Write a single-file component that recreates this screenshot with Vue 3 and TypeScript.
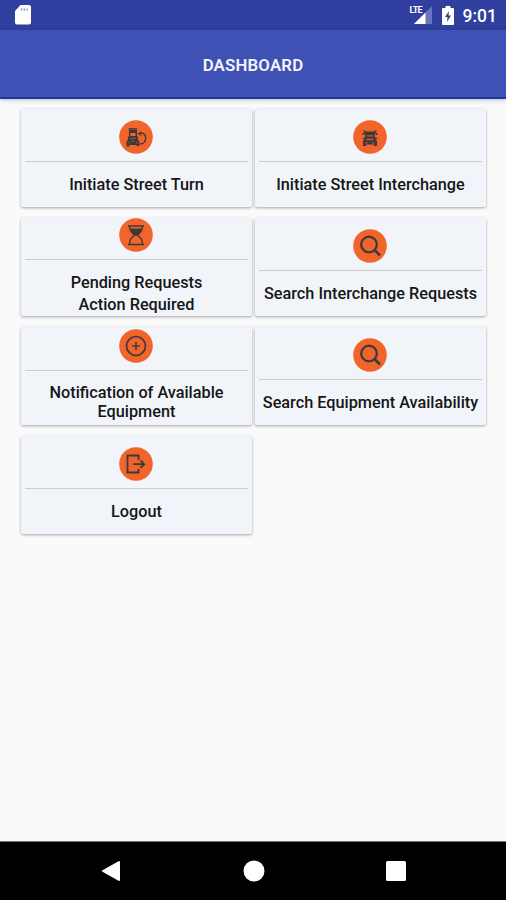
<script setup lang="ts">
type IconName = 'turn' | 'interchange' | 'hourglass' | 'search' | 'plus' | 'logout'

interface Tile {
  icon: IconName
  lines: string[]
  layout?: 'tall' | 'wrapped'
}

const tiles: Tile[] = [
  { icon: 'turn', lines: ['Initiate Street Turn'] },
  { icon: 'interchange', lines: ['Initiate Street Interchange'] },
  { icon: 'hourglass', lines: ['Pending Requests', 'Action Required'], layout: 'tall' },
  { icon: 'search', lines: ['Search Interchange Requests'] },
  { icon: 'plus', lines: ['Notification of Available', 'Equipment'], layout: 'wrapped' },
  { icon: 'search', lines: ['Search Equipment Availability'] },
  { icon: 'logout', lines: ['Logout'] },
]
</script>

<template>
  <div class="screen">
    <header class="status">
      <svg class="sd" viewBox="0 0 16 20" width="16" height="20">
        <path d="M5.500 0H14a2 2 0 0 1 2 2v15.500a2 2 0 0 1-2 2H2a2 2 0 0 1-2-2V6z" fill="#fff" />
        <path d="M6.500 3.500v2M9.300 3.500v2M12.100 3.500v2" stroke="#7d88c6" stroke-width="1.400" />
      </svg>
      <div class="signal">
        <svg viewBox="0 0 18 18" width="18" height="18">
          <path d="M18 0V18H0z" fill="#6976bc" />
          <path d="M11.500 6.500V18H0z" fill="#fff" />
        </svg>
        <span class="lte">LTE</span>
      </div>
      <svg class="battery" viewBox="0 0 12 19" width="12" height="19">
        <path d="M3.500 0h5v2H11a1 1 0 0 1 1 1v15a1 1 0 0 1-1 1H1a1 1 0 0 1-1-1V3a1 1 0 0 1 1-1h2.500z" fill="#fff" />
        <path d="M7 5 3 11h2.500L5 16l4-6.500H6.500z" fill="#303f9f" />
      </svg>
      <span class="time">9:01</span>
    </header>

    <div class="appbar"><h1 class="title">DASHBOARD</h1></div>

    <main class="grid">
      <section v-for="tile in tiles" :key="tile.lines[0]" class="card" :class="tile.layout">
        <svg class="icon" viewBox="0 0 34 34" width="34" height="34" fill="none" stroke="#3c3a38">
          <circle cx="17" cy="17" r="16.800" fill="#f1642b" stroke="none" />
          <g v-if="tile.icon === 'turn'">
            <path d="M9.500 9H18M10.700 10v6M17.300 10v6" stroke-width="1.500" />
            <path d="M10 10h8v3h-8zM9.500 16h9l1 4.500 1 1v4.500h-3V25h-7v1.500h-3V21.500l1-1z" fill="#3c3a38" stroke="none" />
            <path d="M11 18.300h6M9 22.800h2M17 22.800h2M12.500 21h3" stroke="#b05431" stroke-width="1" />
            <path d="M19.500 14c4-2.500 7.200 0 7.200 4s-2.700 6-5.700 6" stroke-width="1.400" />
            <path d="M22 11.500 19.500 14l3 1.800" stroke-width="1" />
          </g>
          <g v-else-if="tile.icon === 'interchange'">
            <path d="M12 12.200h10M10.500 10.500l2 1.500M23.500 10.500l-2 1.500M9.500 14.500l2-1.200h11l2 1.200" stroke-width="1.500" />
            <path d="M12.500 13h9l1 6 1.500 2v5h-3v-1.500h-8V26h-3v-5l1.500-2z" fill="#3c3a38" stroke="none" />
            <path d="M13.800 15.800h6.400M13.500 19.500h7M12.500 22.800h2M19.500 22.800h2" stroke="#ce5a2d" stroke-width="1.300" />
            <path d="M9.500 18.500h2.500M22 18.500h2.500" stroke-width="1" />
          </g>
          <g v-else-if="tile.icon === 'hourglass'">
            <path d="M9 8h16M9 26.500h16" stroke-width="1.500" />
            <path d="M10.500 8.500c0 4.500 2 6.500 5.500 8.500-3.500 2-5.500 4.500-5.500 9M23.500 8.500c0 4.500-2 6.500-5.500 8.500 3.500 2 5.500 4.500 5.500 9" stroke-width="1.300" />
            <path d="M11 10.500h12c-.5 4-2.500 5.500-5 7h-2c-2.500-1.500-4.500-3-5-7z" fill="#3c3a38" stroke="none" />
          </g>
          <g v-else-if="tile.icon === 'search'">
            <circle cx="16" cy="15.500" r="7.800" stroke-width="2.200" />
            <path d="m21.500 21 5.500 5.500" stroke-width="2.500" />
          </g>
          <g v-else-if="tile.icon === 'plus'">
            <circle cx="17" cy="17" r="9.500" stroke-width="1.700" />
            <path d="M17 13v8M13 17h8" stroke-width="1.500" />
          </g>
          <g v-else>
            <path d="M19.500 13V8.500H8.500v17h11V22" stroke-width="1.800" />
            <path d="M14 17.200h11M21.500 13.500l3.700 3.700-3.700 3.700" stroke-width="1.800" />
          </g>
        </svg>
        <div class="divider"></div>
        <p class="label">
          <span v-for="line in tile.lines" :key="line">{{ line }}</span>
        </p>
      </section>
    </main>

    <nav class="navbar">
      <svg viewBox="0 0 20 22" width="20" height="22">
        <path d="M18 2v18L2 11z" fill="#fff" stroke="#fff" stroke-width="2" stroke-linejoin="round" />
      </svg>
      <svg viewBox="0 0 22 22" width="22" height="22"><circle cx="11" cy="11" r="10.500" fill="#fff" /></svg>
      <svg viewBox="0 0 20 20" width="20" height="20"><rect width="20" height="20" rx="1.500" fill="#fff" /></svg>
    </nav>
  </div>
</template>

<style>
body {
  margin: 0;
}
</style>

<style scoped>
.screen {
  display: flex;
  flex-direction: column;
  width: 506px;
  height: 900px;
  overflow: hidden;
  background: #fafafa;
  font-family: Roboto, sans-serif;
  font-weight: 500;
}
.status {
  display: flex;
  box-sizing: border-box;
  height: 30px;
  padding: 0 9px 0 15px;
  background: #303f9f;
  color: #fff;
}
.sd {
  margin-top: 5px;
}
.signal {
  position: relative;
  margin: 6px 10px 0 auto;
  height: 18px;
}
.lte {
  position: absolute;
  left: -4px;
  top: 0;
  font-size: 9px;
  line-height: 9px;
  font-weight: 700;
  letter-spacing: -0.7px;
}
.battery {
  margin: 6px 9px 0 0;
}
.time {
  font-size: 17.5px;
  line-height: 32px;
  white-space: nowrap;
}
.appbar {
  position: relative;
  box-sizing: border-box;
  display: flex;
  align-items: center;
  justify-content: center;
  height: 69px;
  background: #3f51b5;
  border-bottom: 2px solid #1b3a9d;
  box-shadow: 0 1px 4px rgba(0, 0, 0, 0.25);
}
.title {
  margin: 2px 0 0;
  color: #f4f5fc;
  font-size: 16.8px;
  font-weight: 600;
  letter-spacing: 0.2px;
  line-height: 20px;
}
.grid {
  flex: 1;
  display: grid;
  grid-template-columns: 231px 231px;
  grid-auto-rows: 98px;
  gap: 11px 3px;
  padding: 10px 0 0 21px;
}
.card {
  display: flex;
  flex-direction: column;
  align-items: center;
  box-sizing: border-box;
  padding: 11px 4px 0;
  background: #f1f5f9;
  border-radius: 2px;
  box-shadow: 0 1px 3px rgba(0, 0, 0, 0.35);
}
.icon {
  flex: none;
  margin-right: 1px;
}
.divider {
  align-self: stretch;
  height: 1px;
  margin-top: 7px;
  background: #cacdd0;
}
.label {
  display: flex;
  flex-direction: column;
  align-items: center;
  margin: 12px 0 0;
  color: #151617;
  font-size: 16.25px;
  line-height: 22px;
  white-space: nowrap;
}
.tall {
  padding-top: 0;
}
.wrapped {
  padding-top: 2px;
}
.wrapped .label {
  margin-top: 12px;
  line-height: 19px;
}
.navbar {
  display: flex;
  align-items: center;
  justify-content: space-between;
  box-sizing: border-box;
  height: 59px;
  padding: 0 100px 1px 101px;
  background: #000;
  border-top: 1px solid #777;
}
</style>
